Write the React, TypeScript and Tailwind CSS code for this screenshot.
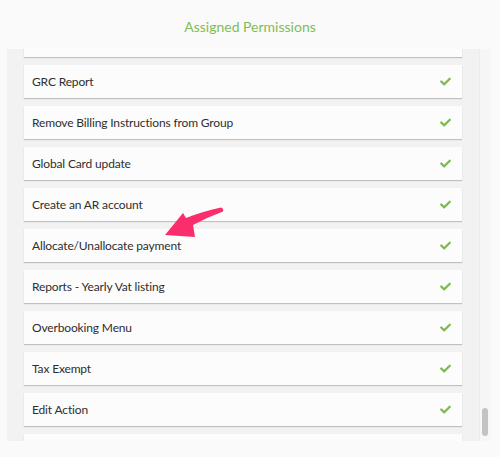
import React from 'react';

const permissions = [
  '',
  'GRC Report',
  'Remove Billing Instructions from Group',
  'Global Card update',
  'Create an AR account',
  'Allocate/Unallocate payment',
  'Reports - Yearly Vat listing',
  'Overbooking Menu',
  'Tax Exempt',
  'Edit Action',
  '',
];

const Check = () => (
  <svg width="11" height="9" viewBox="0 0 512 400" className="fill-[#7cb94a]">
    <path d="M173.9 389.8L7.5 223.4c-10-10-10-26.2 0-36.2l36.2-36.2c10-10 26.2-10 36.2 0L192 263.1 432.1 23c10-10 26.2-10 36.2 0l36.2 36.2c10 10 10 26.2 0 36.2L210.1 389.8c-10 10-26.2 10-36.2 0z" />
  </svg>
);

const Arrow = () => (
  <svg width="70" height="40" viewBox="0 0 70 40" className="absolute left-[160px] top-[204px]">
    <path
      d="M5 31 L23 9 L26 14 Q44 7 61 3.5 Q64 4.5 63 7.5 Q48 13 33 21 L35 33 Z"
      className="fill-[#fb2d6c]"
    />
  </svg>
);

export default function App() {
  return (
    <div className="relative w-[500px] h-[457px] overflow-hidden bg-[#fafafa] font-['Lato',sans-serif]">
      <div className="h-[49px] flex items-center justify-center pt-[3px]">
        <h2 className="text-[14px] text-[#80bd55]">Assigned Permissions</h2>
      </div>
      <div className="flex pl-[7px]">
        <div className="w-[472px] h-[392px] bg-[#f2f2f2] overflow-hidden px-[17px]">
          <div className="flex flex-col gap-[8px] -mt-[25px]">
            {permissions.map((p, i) => (
              <div
                key={i}
                className="h-[33px] shrink-0 bg-[#fcfcfc] shadow-[0_1px_1px_rgba(0,0,0,0.2)] flex items-center justify-between pl-[8px] pr-[11px]"
              >
                <span className="text-[12px] tracking-[-0.15px] text-[#2e2e2e]">{p}</span>
                {p && <Check />}
              </div>
            ))}
          </div>
        </div>
        <div className="w-[12px] h-[392px] bg-[#f6f6f6] border-l border-[#ececec]">
          <div className="w-[6px] h-[28px] ml-[2px] mt-[359px] rounded-full bg-[#c3c3c3]" />
        </div>
      </div>
      <Arrow />
    </div>
  );
}
